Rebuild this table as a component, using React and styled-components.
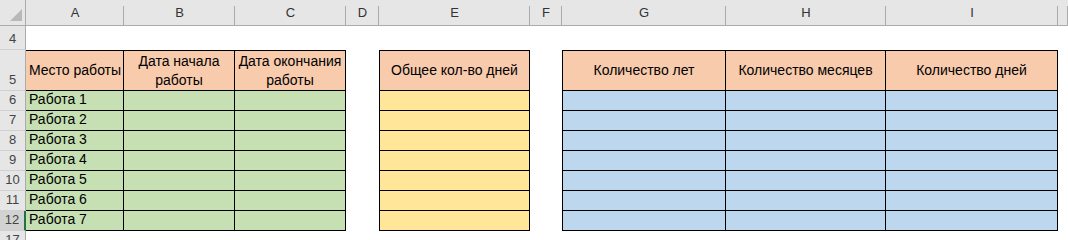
import React from 'react'
import styled, { createGlobalStyle } from 'styled-components';

const COLS = '26px 98px 111px 111px 33px 151px 32px 164px 160px 172px 10px';

const GlobalStyle = createGlobalStyle`
  html, body {
    margin: 0;
    padding: 0;
    background: #fff;
    overflow: hidden;
  }
  body {
    font-family: "Liberation Sans", Arial, sans-serif;
  }
`;

const Sheet = styled.div`
  width: 1068px;
  height: 240px;
  overflow: hidden;
  background: #fff;
`;

const Row = styled.div`
  display: grid;
  grid-template-columns: ${COLS};
  height: ${p => p.$h}px;
`;

const Corner = styled.div`
  background: #e6e6e6;
  border-right: 1px solid #ababab;
  border-bottom: 1px solid #ababab;
  display: flex;
  align-items: flex-end;
  justify-content: flex-end;
  padding: 0 3px 4px 0;
  box-sizing: border-box;
`;

const ColLetter = styled.div`
  background: linear-gradient(#ababab, #ababab) right 6px / 1px calc(100% - 6px) no-repeat, #e6e6e6;
  border-bottom: 1px solid #ababab;
  display: flex;
  align-items: center;
  justify-content: center;
  font-size: 13px;
  color: #333;
  padding-bottom: 1px;
  box-sizing: border-box;
`;

const RowNum = styled.div`
  background: ${p => (p.$active ? '#d2d2d2' : '#e6e6e6')};
  border-right: ${p => (p.$active ? '2px solid #217346' : '1px solid #ababab')};
  border-bottom: 1px solid #d0d0d0;
  box-sizing: border-box;
  display: flex;
  align-items: flex-end;
  justify-content: center;
  font-size: 13px;
  line-height: 18px;
  color: #444;
  padding-bottom: 1px;
  overflow: hidden;
`;

const Cell = styled.div`
  box-sizing: border-box;
  background: ${p => p.$fill || 'transparent'};
  border-top: ${p => (p.$top ? '1px solid #000' : 'none')};
  border-left: ${p => (p.$left ? '1px solid #000' : 'none')};
  border-right: ${p => (p.$boxed ? '1px solid #000' : 'none')};
  border-bottom: ${p => (p.$boxed ? '1px solid #000' : 'none')};
  display: flex;
  align-items: ${p => p.$valign || 'flex-end'};
  justify-content: ${p => (p.$center ? 'center' : 'flex-start')};
  text-align: ${p => (p.$center ? 'center' : 'left')};
  padding: ${p => (p.$center ? '0 2px' : '0 3px 1px')};
  font-size: 14px;
  line-height: 19px;
  color: #000;
  white-space: nowrap;
  overflow: hidden;
`;

const PEACH = '#f8cbad';
const GREEN = '#c6e0b4';
const YELLOW = '#ffe699';
const BLUE = '#bdd7ee';

const letters = ['A', 'B', 'C', 'D', 'E', 'F', 'G', 'H', 'I', ''];
const jobs = [1, 2, 3, 4, 5, 6, 7];

function CornerMark() {
  return (
    <svg width="12" height="12" viewBox="0 0 12 12">
      <polygon points="12,0 12,12 0,12" fill="#b8b8b8" />
    </svg>
  );
}

export default function App() {
  return (
    <Sheet>
      <GlobalStyle />
      <Row $h={26}>
        <Corner><CornerMark /></Corner>
        {letters.map((l, i) => <ColLetter key={i}>{l}</ColLetter>)}
      </Row>

      <Row $h={24}>
        <RowNum>4</RowNum>
      </Row>

      <Row $h={41}>
        <RowNum>5</RowNum>
        <Cell $fill={PEACH} $top $boxed $valign="center">Место работы</Cell>
        <Cell $fill={PEACH} $top $boxed $center $valign="center">Дата начала<br />работы</Cell>
        <Cell $fill={PEACH} $top $boxed $center $valign="center">Дата окончания<br />работы</Cell>
        <Cell />
        <Cell $fill={PEACH} $top $left $boxed $center $valign="center">Общее кол-во дней</Cell>
        <Cell />
        <Cell $fill={PEACH} $top $left $boxed $center $valign="center">Количество лет</Cell>
        <Cell $fill={PEACH} $top $boxed $center $valign="center">Количество месяцев</Cell>
        <Cell $fill={PEACH} $top $boxed $center $valign="center">Количество дней</Cell>
      </Row>

      {jobs.map(n => (
        <Row $h={20} key={n}>
          <RowNum $active={n === 7}>{n + 5}</RowNum>
          <Cell $fill={GREEN} $boxed>Работа {n}</Cell>
          <Cell $fill={GREEN} $boxed />
          <Cell $fill={GREEN} $boxed />
          <Cell />
          <Cell $fill={YELLOW} $left $boxed />
          <Cell />
          <Cell $fill={BLUE} $left $boxed />
          <Cell $fill={BLUE} $boxed />
          <Cell $fill={BLUE} $boxed />
        </Row>
      ))}

      <Row $h={20}>
        <RowNum>17</RowNum>
      </Row>
    </Sheet>
  );
}
